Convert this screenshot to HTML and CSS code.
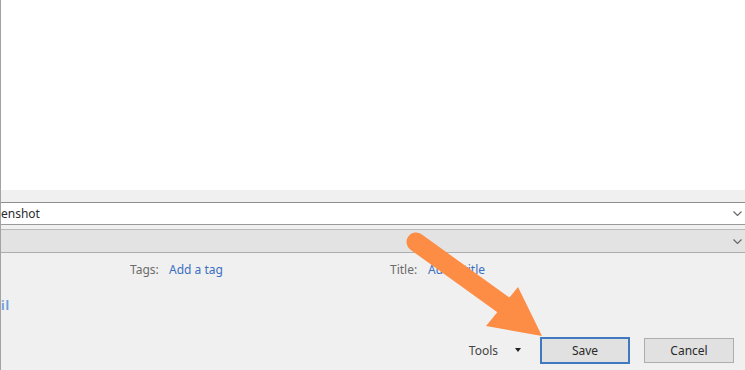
FILE: index.html
```html
<!DOCTYPE html>
<html>
<head>
<meta charset="utf-8">
<link rel="stylesheet" href="styles.css">
</head>
<body>
<div class="window">
  <div class="preview"></div>
  <div class="form">
    <div class="field filename">
      <span class="value">enshot</span>
      <svg class="chev" width="9" height="5" viewBox="0 0 9 5"><polyline points="0.5,0.5 4.5,4.5 8.5,0.5" fill="none" stroke="#6a6a6a" stroke-width="1.2"/></svg>
    </div>
    <div class="field filetype">
      <span class="value"></span>
      <svg class="chev" width="9" height="5" viewBox="0 0 9 5"><polyline points="0.5,0.5 4.5,4.5 8.5,0.5" fill="none" stroke="#6a6a6a" stroke-width="1.2"/></svg>
    </div>
    <div class="meta">
      <div class="meta-item tags"><span class="label">Tags:</span><span class="link">Add a tag</span></div>
      <div class="meta-item title"><span class="label">Title:</span><span class="link">Add a title</span></div>
    </div>
    <div class="side-link">il</div>
    <div class="actions">
      <div class="tools"><span>Tools</span><span class="tri"></span></div>
      <button class="btn save">Save</button>
      <button class="btn cancel">Cancel</button>
    </div>
  </div>
  <svg class="arrow" width="745" height="370" viewBox="0 0 745 370">
    <line x1="416" y1="242" x2="505" y2="306" stroke="#fd8c44" stroke-width="19" stroke-linecap="round"/>
    <polygon points="518,287 486,326 542,336" fill="#fd8c44"/>
  </svg>
</div>
</body>
</html>
```

FILE: styles.css
```css
html, body {
  margin: 0;
  padding: 0;
}
body {
  width: 745px;
  height: 370px;
  overflow: hidden;
  font-family: "Noto Sans", "Open Sans", sans-serif;
  font-size: 12px;
  background: #f0f0f0;
}
.window {
  position: relative;
  width: 745px;
  height: 370px;
  display: flex;
  flex-direction: column;
  border-left: 1px solid #a3a3a3;
  box-sizing: border-box;
}
.preview {
  height: 190px;
  background: #ffffff;
  flex: none;
}
.form {
  flex: 1;
  background: #f0f0f0;
  display: flex;
  flex-direction: column;
  padding-top: 12px;
}
.field {
  display: flex;
  align-items: center;
  justify-content: space-between;
  box-sizing: border-box;
  padding-right: 3px;
}
.filename {
  height: 23px;
  background: #ffffff;
  border-top: 1px solid #8e8e8e;
  border-bottom: 1px solid #9a9a9a;
}
.filename .value {
  color: #2b2b2b;
  line-height: 16px;
}
.filetype {
  height: 24px;
  margin-top: 4px;
  background: #e3e3e3;
  border-top: 1px solid #b9b9b9;
  border-bottom: 1px solid #adadad;
}
.chev {
  display: block;
}
.meta {
  display: flex;
  margin-top: 9px;
  padding-left: 129px;
  line-height: 16px;
}
.meta-item {
  display: flex;
}
.tags {
  width: 260px;
}
.tags .label {
  width: 39px;
}
.title .label {
  width: 38px;
}
.label {
  color: #6b6b6b;
}
.link {
  color: #3a6fbf;
}
.side-link {
  margin-top: 20px;
  line-height: 16px;
  color: #6f9fdc;
  font-weight: bold;
  letter-spacing: 1px;
}
.actions {
  display: flex;
  align-items: center;
  justify-content: flex-end;
  margin-top: 23px;
  padding-right: 11px;
  height: 26px;
}
.tools {
  display: flex;
  align-items: center;
  color: #444444;
  margin-right: 19px;
}
.tri {
  width: 0;
  height: 0;
  border-left: 3.5px solid transparent;
  border-right: 3.5px solid transparent;
  border-top: 4px solid #222222;
  margin-left: 17px;
}
.btn {
  font-family: inherit;
  font-size: 12px;
  color: #2a2a2a;
  background: #e1e1e1;
  box-sizing: border-box;
  width: 90px;
  padding: 0;
  margin: 0;
}
.save {
  height: 27px;
  border: 2px solid #4079c0;
  margin-right: 14px;
}
.cancel {
  height: 25px;
  border: 1px solid #adadad;
}
.arrow {
  position: absolute;
  left: -1px;
  top: 0;
  pointer-events: none;
}
```
